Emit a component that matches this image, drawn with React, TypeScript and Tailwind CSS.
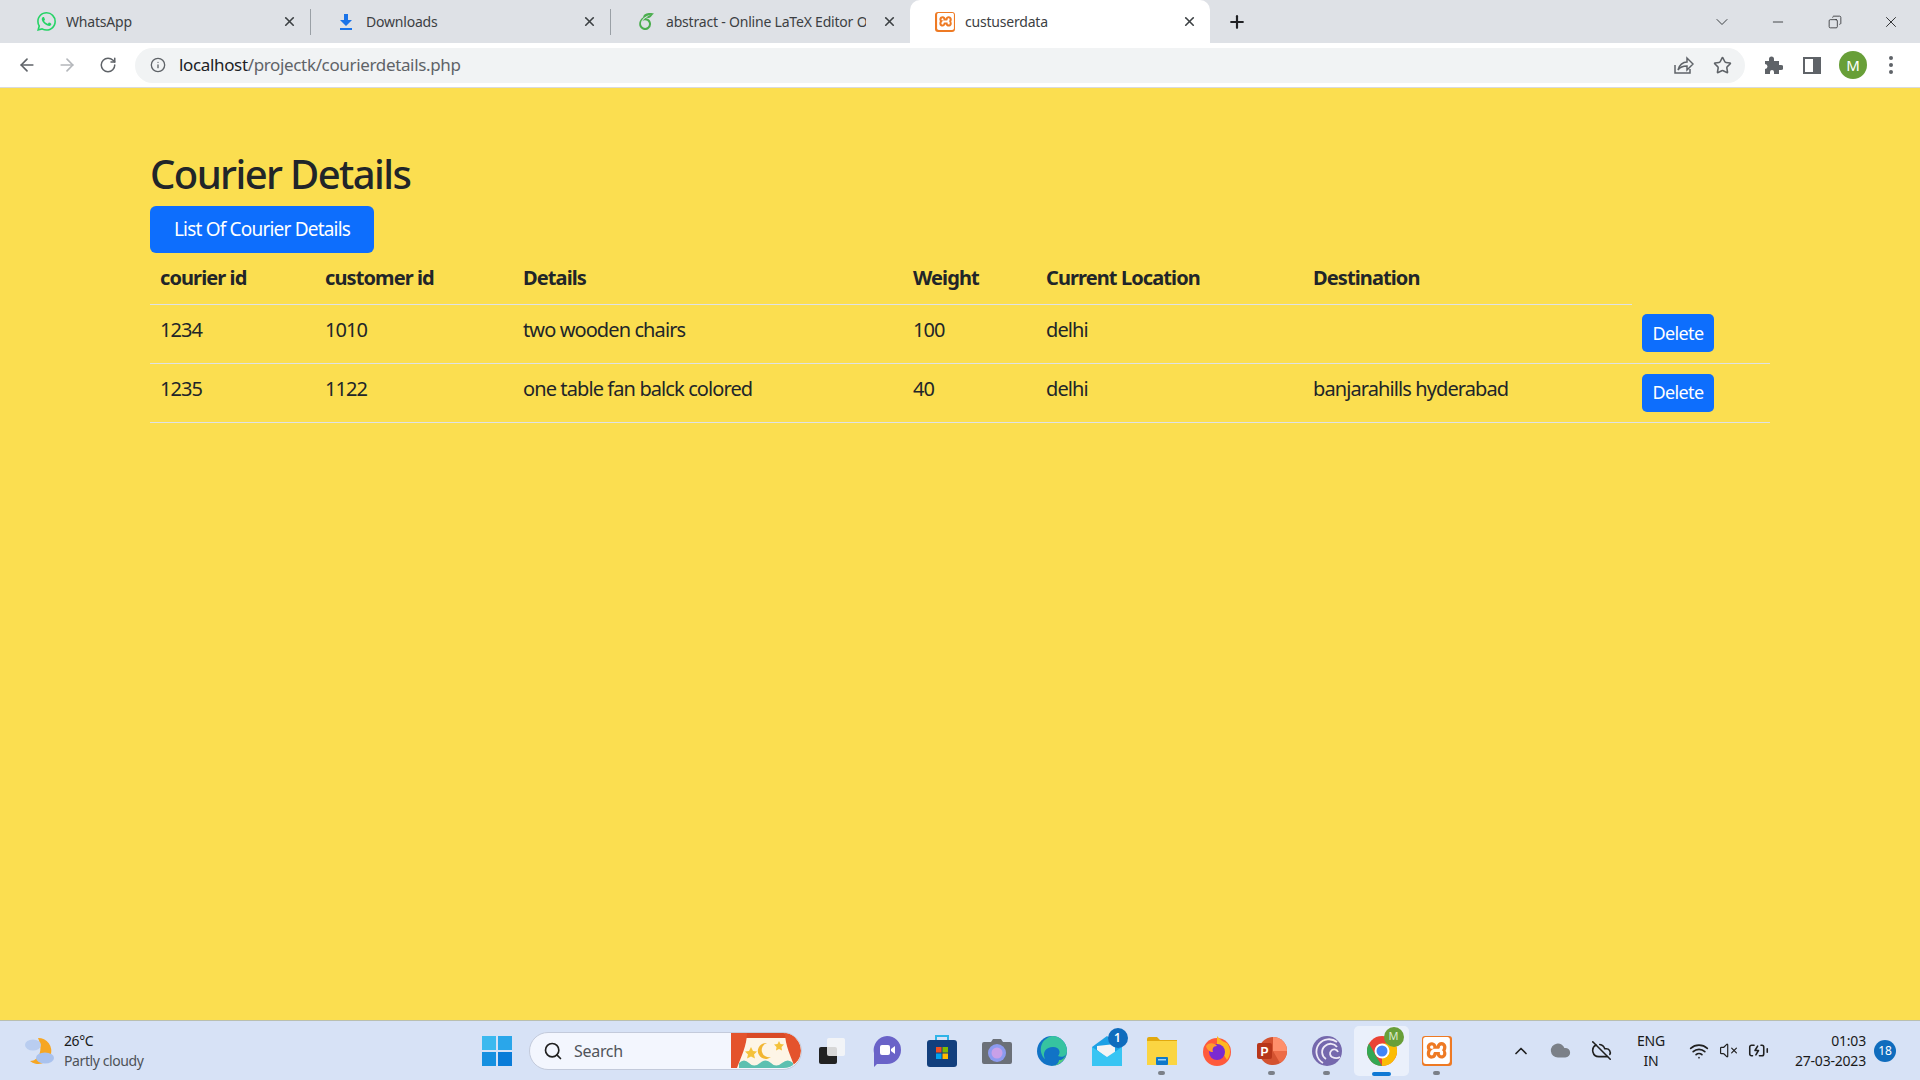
import { ArrowLeft, ArrowRight, BatteryCharging, ChevronDown, ChevronUp, Cloud, CloudOff, Copy, Info, Minus, Plus, RotateCw, Search, Star, VolumeX, Wifi, X } from "lucide-react";
import { SiOverleaf, SiWhatsapp, SiXampp } from "react-icons/si";

const rows = [
  { courier: "1234", customer: "1010", details: "two wooden chairs", weight: "100", location: "delhi", destination: "" },
  { courier: "1235", customer: "1122", details: "one table fan balck colored", weight: "40", location: "delhi", destination: "banjarahills hyderabad" },
];

const headers = ["courier id", "customer id", "Details", "Weight", "Current Location", "Destination"];

function XamppIcon({ size }: { size: number }) {
  return (
    <div className="flex items-center justify-center rounded-[3px] bg-[#ee7a24]" style={{ width: size, height: size }}>
      <SiXampp size={size - 3} color="#ffffff" />
    </div>
  );
}

function BrowserTab({ icon, title, active, fade }: { icon: React.ReactNode; title: string; active?: boolean; fade?: boolean }) {
  return (
    <div className={`relative flex h-[43px] items-center pl-[25px] ${active ? "w-[300px] rounded-t-[10px] bg-white" : "w-[299px]"}`}>
      <div className="flex w-5 justify-center">{icon}</div>
      <span className={`ml-[10px] w-[200px] overflow-hidden text-[14px] tracking-[-0.2px] whitespace-nowrap text-[#3c4043] ${fade ? "mr-[-10px]" : ""}`}>{title}</span>
      <X size={15} strokeWidth={2.6} className="absolute right-[13px] top-[14px] text-[#3c4043]" />
    </div>
  );
}

function TabBar() {
  return (
    <div className="flex h-[43px] shrink-0 items-center bg-[#dee1e6] pl-[11px]">
      <BrowserTab icon={<SiWhatsapp size={19} color="#25d366" />} title="WhatsApp" />
      <div className="h-[26px] w-px bg-[#9aa0a6]" />
      <BrowserTab icon={<ArrowDownload />} title="Downloads" />
      <div className="h-[26px] w-px bg-[#9aa0a6]" />
      <BrowserTab icon={<SiOverleaf size={17} color="#4cae4f" />} title="abstract - Online LaTeX Editor Ov" fade />
      <BrowserTab icon={<XamppIcon size={20} />} title="custuserdata" active />
      <Plus size={20} strokeWidth={2.6} className="ml-[17px] text-[#202124]" />
      <div className="ml-auto flex items-center">
        <ChevronDown size={20} strokeWidth={1.2} className="text-[#3c4043]" />
        <Minus size={16} strokeWidth={1.2} className="ml-[38px] text-[#202124]" />
        <Copy size={14} strokeWidth={1.3} className="ml-[42px] -scale-x-100 text-[#202124]" />
        <X size={18} strokeWidth={1.2} className="ml-[40px] mr-[20px] text-[#202124]" />
      </div>
    </div>
  );
}

function ArrowDownload() {
  return (
    <svg width="14" height="16" viewBox="0 0 14 16">
      <path d="M5 0h4v6h4L7 12 1 6h4z" fill="#1a73e8" />
      <rect x="1" y="14" width="12" height="2" fill="#1a73e8" />
    </svg>
  );
}

function ToolBar() {
  return (
    <div className="flex h-[45px] shrink-0 items-center border-b border-[#d8dade] bg-white pl-[17px]">
      <ArrowLeft size={20} className="text-[#5f6368]" />
      <ArrowRight size={20} className="ml-[20px] text-[#b4b7bb]" />
      <RotateCw size={18} className="ml-[22px] text-[#5f6368]" />
      <div className="ml-[18px] flex h-[35px] w-[1610px] items-center rounded-full bg-[#f1f3f4] pl-[15px]">
        <Info size={16} className="text-[#5f6368]" />
        <span className="ml-[13px] text-[17px] tracking-[-0.35px] text-[#5f6368]">
          <span className="text-[#202124]">localhost</span>/projectk/courierdetails.php
        </span>
        <svg width="22" height="22" viewBox="0 0 22 22" className="ml-auto" fill="none" stroke="#5f6368" strokeWidth="1.5">
          <path d="M3 11v8h15v-4" />
          <path d="M6 16c1-5 5-8 9-8V4l6 6-6 6v-4c-4 0-7 1-9 4z" />
        </svg>
        <Star size={19} strokeWidth={2} className="ml-[19px] mr-[13px] text-[#5f6368]" />
      </div>
      <svg width="20" height="20" viewBox="0 0 20 20" className="ml-[18px]" fill="#5f6368">
        <path d="M2 6h4V4a2.5 2.5 0 0 1 5 0v2h5v4h2a2.500 2.500 0 0 1 0 5h-2v4h-5v-2a2 2 0 0 0-4 0v2H2v-5a2.500 2.500 0 0 0 0-5z" />
      </svg>
      <svg width="18" height="17" viewBox="0 0 18 17" className="ml-[20px]">
        <path fillRule="evenodd" d="M0 0h18v17H0zM2 2v13h8V2z" fill="#5f6368" />
      </svg>
      <div className="ml-[18px] flex h-7 w-7 items-center justify-center rounded-full bg-[#689f38] text-[15px] text-white">M</div>
      <div className="ml-[22px] flex flex-col gap-[3px]">
        <span className="h-[4px] w-[4px] rounded-full bg-[#5f6368]" />
        <span className="h-[4px] w-[4px] rounded-full bg-[#5f6368]" />
        <span className="h-[4px] w-[4px] rounded-full bg-[#5f6368]" />
      </div>
    </div>
  );
}

function CourierTable() {
  return (
    <table className="w-[1620px] table-fixed border-collapse text-left text-[20px] tracking-[-0.9px] text-[#212529]">
      <colgroup>
        <col className="w-[165px]" />
        <col className="w-[198px]" />
        <col className="w-[390px]" />
        <col className="w-[133px]" />
        <col className="w-[267px]" />
        <col className="w-[329px]" />
        <col />
      </colgroup>
      <thead>
        <tr>
          {headers.map((h) => (
            <th key={h} className="h-[51px] border-b border-[#dee2e6] px-[10px] font-bold">{h}</th>
          ))}
        </tr>
      </thead>
      <tbody>
        {rows.map((r) => (
          <tr key={r.courier} className="border-b border-[#dee2e6]">
            <td className="h-[59px] px-[10px] pb-[7px] align-middle">{r.courier}</td>
            <td className="px-[10px] pb-[7px]">{r.customer}</td>
            <td className="px-[10px] pb-[7px]">{r.details}</td>
            <td className="px-[10px] pb-[7px]">{r.weight}</td>
            <td className="px-[10px] pb-[7px]">{r.location}</td>
            <td className="px-[10px] pb-[7px]">{r.destination}</td>
            <td className="px-[10px]">
              <button className="flex h-[38px] w-[72px] items-center justify-center rounded-[5px] bg-[#0d6efd] text-[18px] tracking-[-0.6px] text-white">Delete</button>
            </td>
          </tr>
        ))}
      </tbody>
    </table>
  );
}

function TaskIcon({ children, dot, active }: { children: React.ReactNode; dot?: boolean; active?: boolean }) {
  return (
    <div className={`relative flex h-[50px] w-[55px] items-center justify-center ${active ? "rounded-[5px] bg-[#eaf0fb]" : ""}`}>
      {children}
      {dot && <span className="absolute bottom-[1px] h-[4px] w-[7px] rounded-full bg-[#7b8088]" />}
      {active && <span className="absolute bottom-0 h-[4px] w-[19px] rounded-full bg-[#0f78d4]" />}
    </div>
  );
}

function SearchBanner() {
  return (
    <svg width="70" height="35" viewBox="0 0 70 35" className="rounded-r-full">
      <rect width="70" height="35" fill="#fdf5e6" />
      <path d="M0 0h70v5H0z" fill="#d94a26" />
      <path d="M0 0h16c0 12-6 24-10 35H0z" fill="#e4532c" />
      <path d="M70 0H54c0 12 6 24 10 35h6z" fill="#e4532c" />
      <path d="M8 30q5-5 10 0t11 0 11 0 11 0 11 0v5H8z" fill="#5cc0b0" />
      <path d="M36 10a8 8 0 1 0 4 14 7 7 0 1 1-4-14z" fill="#f2b632" />
      <path d="m20 14 2 4 4 .5-3 3 1 4-4-2-4 2 1-4-3-3 4-.5zM48 8l1.500 3 3.500.5-2.500 2.500.5 3.500-3-1.500-3 1.500.5-3.500L43 11.500l3.500-.5z" fill="#f4c23a" />
    </svg>
  );
}

function TaskBar() {
  return (
    <div className="flex h-[60px] shrink-0 items-center border-t border-[#b9bfb0] bg-[#d7e2f6] font-['Noto_Sans',sans-serif] text-[#1a1a1a]">
      <div className="flex w-[482px] items-center pl-[24px]">
        <svg width="32" height="32" viewBox="0 0 32 32">
          <path d="M14 3a13 13 0 1 1-8 23c8 0 14-10 8-23z" fill="#f6a623" />
          <ellipse cx="9" cy="10" rx="8" ry="5.500" fill="#b9cdf0" />
          <ellipse cx="21" cy="23" rx="9" ry="5.500" fill="#a9c2ee" />
        </svg>
        <div className="ml-[8px] flex flex-col text-[14px] leading-[20px] tracking-[-0.4px]">
          <span>26°C</span>
          <span className="text-[#4e5258]">Partly cloudy</span>
        </div>
      </div>
      <svg width="30" height="30" viewBox="0 0 30 30" className="shrink-0">
        <rect width="14" height="14" fill="#3cb9ef" />
        <rect x="16" width="14" height="14" fill="#2aa6ea" />
        <rect y="16" width="14" height="14" fill="#1590e0" />
        <rect x="16" y="16" width="14" height="14" fill="#0a7cd8" />
      </svg>
      <div className="ml-[17px] flex h-[38px] w-[273px] items-center overflow-hidden rounded-full border border-[#c3cadb] bg-[#f3f6fe] pl-[13px]">
        <Search size={20} strokeWidth={2} className="text-[#202020]" />
        <span className="ml-[11px] text-[16px] tracking-[-0.3px] text-[#50545a]">Search</span>
        <div className="ml-auto"><SearchBanner /></div>
      </div>
      <div className="flex items-center">
        <div className="ml-[2px] flex items-center">
          <TaskIcon>
            <svg width="26" height="26" viewBox="0 0 26 26">
              <rect x="0" y="9" width="18" height="17" rx="2" fill="#222" />
              <rect x="8" y="0" width="18" height="18" rx="2" fill="#f7f7f7" fillOpacity="0.85" />
            </svg>
          </TaskIcon>
          <TaskIcon>
            <svg width="30" height="32" viewBox="0 0 30 32">
              <path d="M15 1a14 14 0 0 1 0 28H5l-3 3v-14A14 14 0 0 1 15 1z" fill="#6a63c8" />
              <rect x="8" y="10" width="10" height="10" rx="2" fill="#fff" />
              <path d="m19 14 4-3v8l-4-3z" fill="#fff" />
            </svg>
          </TaskIcon>
          <TaskIcon>
            <svg width="30" height="32" viewBox="0 0 30 32">
              <path d="M9 6V1h12v5" fill="none" stroke="#2fb4e8" strokeWidth="2" />
              <rect y="5" width="30" height="27" rx="3" fill="#123f7d" />
              <rect x="9" y="12" width="5.500" height="5.500" fill="#f25022" />
              <rect x="15.500" y="12" width="5.500" height="5.500" fill="#7fba00" />
              <rect x="9" y="18.500" width="5.500" height="5.500" fill="#00a4ef" />
              <rect x="15.500" y="18.500" width="5.500" height="5.500" fill="#ffb900" />
            </svg>
          </TaskIcon>
          <TaskIcon>
            <svg width="30" height="30" viewBox="0 0 30 30">
              <path d="M2 6h7l2-3h8l2 3h7a2 2 0 0 1 2 2v18a2 2 0 0 1-2 2H2a2 2 0 0 1-2-2V8a2 2 0 0 1 2-2z" fill="#6b7078" />
              <circle cx="15" cy="17" r="9" fill="#8d9bf0" />
              <circle cx="15" cy="17" r="5.500" fill="#c9a0e8" />
            </svg>
          </TaskIcon>
          <TaskIcon>
            <svg width="30" height="30" viewBox="0 0 30 30">
              <circle cx="15" cy="15" r="15" fill="#1173c6" />
              <path d="M15 0a15 15 0 0 1 15 15c0 5-5 7-9 5 3-3 2-9-5-9C9 11 5 16 8 23 2 18 1 4 15 0z" fill="#36c3a0" />
              <path d="M30 16c-1 8-8 14-16 14 5 0 8-3 8-6 3 1 7-3 8-8z" fill="#55d07a" />
            </svg>
          </TaskIcon>
          <TaskIcon>
            <div className="relative">
              <svg width="30" height="30" viewBox="0 0 30 30">
                <path d="M0 11 15 0l15 11v19H0z" fill="#1da1e5" />
                <path d="m5 10 18-2v10l-8 4-10-8z" fill="#f4f4f4" />
                <path d="m0 11 15 10 15-10v19H0z" fill="#38c5f3" />
              </svg>
              <span className="absolute -right-[6px] -top-[8px] flex h-[20px] w-[20px] items-center justify-center rounded-full bg-[#0f6cbd] text-[12px] font-semibold text-white">1</span>
            </div>
          </TaskIcon>
          <TaskIcon dot>
            <svg width="30" height="28" viewBox="0 0 30 28">
              <path d="M0 2a2 2 0 0 1 2-2h8l3 3h17v4H0z" fill="#e2a90e" />
              <rect y="4" width="30" height="24" fill="#fbd542" />
              <rect x="9" y="20" width="12" height="8" rx="1" fill="#0f78c9" />
              <rect x="11" y="22" width="8" height="1.500" fill="#9fd3f5" />
            </svg>
          </TaskIcon>
          <TaskIcon>
            <svg width="28" height="30" viewBox="0 0 28 30">
              <circle cx="14" cy="16" r="14" fill="#ff5a3c" />
              <path d="M14 0c4 4 6 6 10 7 4 5 4 12 0 17L14 8z" fill="#ffb81f" />
              <circle cx="14" cy="16" r="8" fill="#7b2bd0" />
              <path d="M3 10c3-4 9-3 11 0-4 0-5 3-4 6-3 0-6-2-7-6z" fill="#ff9d2e" />
            </svg>
          </TaskIcon>
          <TaskIcon dot>
            <svg width="30" height="30" viewBox="0 0 30 30">
              <circle cx="16" cy="15" r="14" fill="#d35230" />
              <path d="M16 1a14 14 0 0 1 14 14H16z" fill="#ff8f6b" />
              <path d="M16 15h14a14 14 0 0 1-7 12z" fill="#ed6c47" />
              <rect x="0" y="7" width="15" height="16" rx="2" fill="#b7361a" />
              <text x="3.500" y="20" fontSize="12" fontWeight="700" fill="#fff" fontFamily="Liberation Sans, sans-serif">P</text>
            </svg>
          </TaskIcon>
          <TaskIcon dot>
            <svg width="30" height="32" viewBox="0 0 30 32" fill="none">
              <circle cx="15" cy="16" r="15" fill="#7568ad" />
              <path d="M25 7a13 13 0 0 0-18 2 13 13 0 0 0 4 19M25 12a8 8 0 0 0-12-1 8 8 0 0 0 1 13M26 17a4 4 0 0 0-7-1 4 4 0 0 0 1 6c2 1 5 2 8 0" stroke="#efeaf7" strokeWidth="1.800" />
            </svg>
          </TaskIcon>
          <TaskIcon active>
            <div className="relative">
              <svg width="30" height="30" viewBox="0 0 30 30">
                <circle cx="15" cy="15" r="15" fill="#ea4335" />
                <path d="M15 30a15 15 0 0 0 13-22.500H15z" fill="#fbbc05" />
                <path d="M15 30A15 15 0 0 1 2 7.500L9 20z" fill="#34a853" />
                <circle cx="15" cy="15" r="7.500" fill="#fff" />
                <circle cx="15" cy="15" r="5.500" fill="#4285f4" />
              </svg>
              <span className="absolute -right-[7px] -top-[9px] flex h-[20px] w-[20px] items-center justify-center rounded-full bg-[#689f38] text-[11px] text-[#dce9cd]">M</span>
            </div>
          </TaskIcon>
          <TaskIcon dot>
            <XamppIcon size={30} />
          </TaskIcon>
        </div>
      </div>
      <div className="ml-auto flex items-center text-[14px] tracking-[-0.2px]">
        <ChevronUp size={20} strokeWidth={2} className="text-[#202020]" />
        <Cloud size={21} fill="#7b8088" className="ml-[19px] text-[#7b8088]" />
        <CloudOff size={21} strokeWidth={1.8} className="ml-[20px] text-[#202020]" />
        <div className="ml-[22px] flex w-[34px] flex-col items-center leading-[20px]">
          <span>ENG</span>
          <span>IN</span>
        </div>
        <Wifi size={20} className="ml-[21px] text-[#202020]" />
        <VolumeX size={19} strokeWidth={1.5} className="ml-[10px] text-[#202020]" />
        <BatteryCharging size={21} strokeWidth={1.8} className="ml-[10px] text-[#202020]" />
        <div className="ml-[19px] flex w-[78px] flex-col items-end leading-[20px]">
          <span>01:03</span>
          <span>27-03-2023</span>
        </div>
        <span className="ml-[8px] mr-[24px] flex h-[22px] w-[22px] items-center justify-center rounded-full bg-[#0f6cbd] text-[12px] text-white">18</span>
      </div>
    </div>
  );
}

export default function App() {
  return (
    <div className="flex h-screen w-full flex-col overflow-hidden font-['Noto_Sans',sans-serif]">
      <TabBar />
      <ToolBar />
      <main className="flex-1 bg-[#fbde50] pl-[150px] pt-[62px]">
        <h2 className="text-[40px] leading-[48px] font-medium tracking-[-1.6px] text-[#212529]">Courier Details</h2>
        <button className="mt-[8px] flex h-[47px] w-[224px] items-center justify-center rounded-[6px] bg-[#0d6efd] text-[19px] tracking-[-0.8px] text-white">List Of Courier Details</button>
        <CourierTable />
      </main>
      <TaskBar />
    </div>
  );
}
